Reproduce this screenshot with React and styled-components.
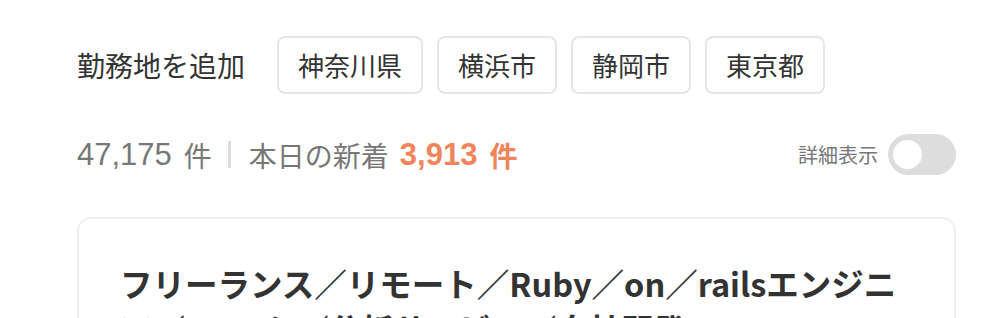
import React from "react";
import styled, { createGlobalStyle } from "styled-components";

const Global = createGlobalStyle`
  html, body { margin: 0; padding: 0; background: #fff; }
  body { font-family: "Noto Sans CJK JP", "Noto Sans", sans-serif; color: #333; }
  * { box-sizing: border-box; }
`;

const Page = styled.div`
  padding: 36px 34px 0 77px;
  display: flex;
  flex-direction: column;
  height: 318px;
  overflow: hidden;
`;

const AreaRow = styled.div`
  display: flex;
  align-items: center;
  gap: 14px;
`;

const AreaLabel = styled.span`
  font-size: 28px;
  line-height: 1;
  color: #333;
  margin-right: 18px;
`;

const Chip = styled.button`
  height: 58px;
  padding: 0 19px;
  border: 2px solid #e6e6e6;
  border-radius: 8px;
  background: #fff;
  font-family: inherit;
  font-size: 26px;
  line-height: 1;
  color: #333;
  display: flex;
  align-items: center;
`;

const CountRow = styled.div`
  margin-top: 40px;
  height: 41px;
  display: flex;
  align-items: center;
  justify-content: space-between;
`;

const Counts = styled.div`
  display: flex;
  align-items: center;
  font-size: 28px;
  line-height: 1;
  color: #777;
`;

const Num = styled.span`
  font-family: "Liberation Sans", "Noto Sans CJK JP", sans-serif;
  font-weight: ${(p) => (p.$accent ? 700 : 400)};
  color: ${(p) => (p.$accent ? "#f0845a" : "#777")};
  font-size: 31px;
`;

const Unit = styled.span`
  font-weight: ${(p) => (p.$accent ? 700 : 400)};
  color: ${(p) => (p.$accent ? "#f0845a" : "#777")};
  margin-left: 12px;
`;

const Divider = styled.span`
  width: 3px;
  height: 27px;
  background: #dddddd;
  margin: 0 18px 0 16px;
`;

const NewLabel = styled.span`
  margin-right: 11px;
`;

const DetailToggle = styled.label`
  display: flex;
  align-items: center;
  gap: 10px;
  font-size: 20px;
  color: #777;
`;

const Switch = styled.span`
  width: 68px;
  height: 41px;
  border-radius: 21px;
  background: #dddddd;
  padding: 6px 5px;
  display: flex;
  align-items: center;
`;

const Knob = styled.span`
  width: 29px;
  height: 29px;
  border-radius: 50%;
  background: #fff;
`;

const Card = styled.div`
  margin-top: 42px;
  border: 2px solid #efefef;
  border-radius: 14px;
  padding: 41px 30px 0 41px;
  flex: 1;
`;

const Title = styled.h2`
  margin: 0;
  font-size: 32.5px;
  line-height: 46px;
  font-weight: 700;
  color: #333;
`;

export default function App() {
  const areas = ["神奈川県", "横浜市", "静岡市", "東京都"];
  return (
    <>
      <Global />
      <Page>
        <AreaRow>
          <AreaLabel>勤務地を追加</AreaLabel>
          {areas.map((a) => (
            <Chip key={a}>{a}</Chip>
          ))}
        </AreaRow>
        <CountRow>
          <Counts>
            <Num>47,175</Num>
            <Unit>件</Unit>
            <Divider />
            <NewLabel>本日の新着</NewLabel>
            <Num $accent>3,913</Num>
            <Unit $accent>件</Unit>
          </Counts>
          <DetailToggle>
            詳細表示
            <Switch>
              <Knob />
            </Switch>
          </DetailToggle>
        </CountRow>
        <Card>
          <Title>
            フリーランス／リモート／Ruby／on／railsエンジニア／Next.js／分析サービス／自社開発
          </Title>
        </Card>
      </Page>
    </>
  );
}
